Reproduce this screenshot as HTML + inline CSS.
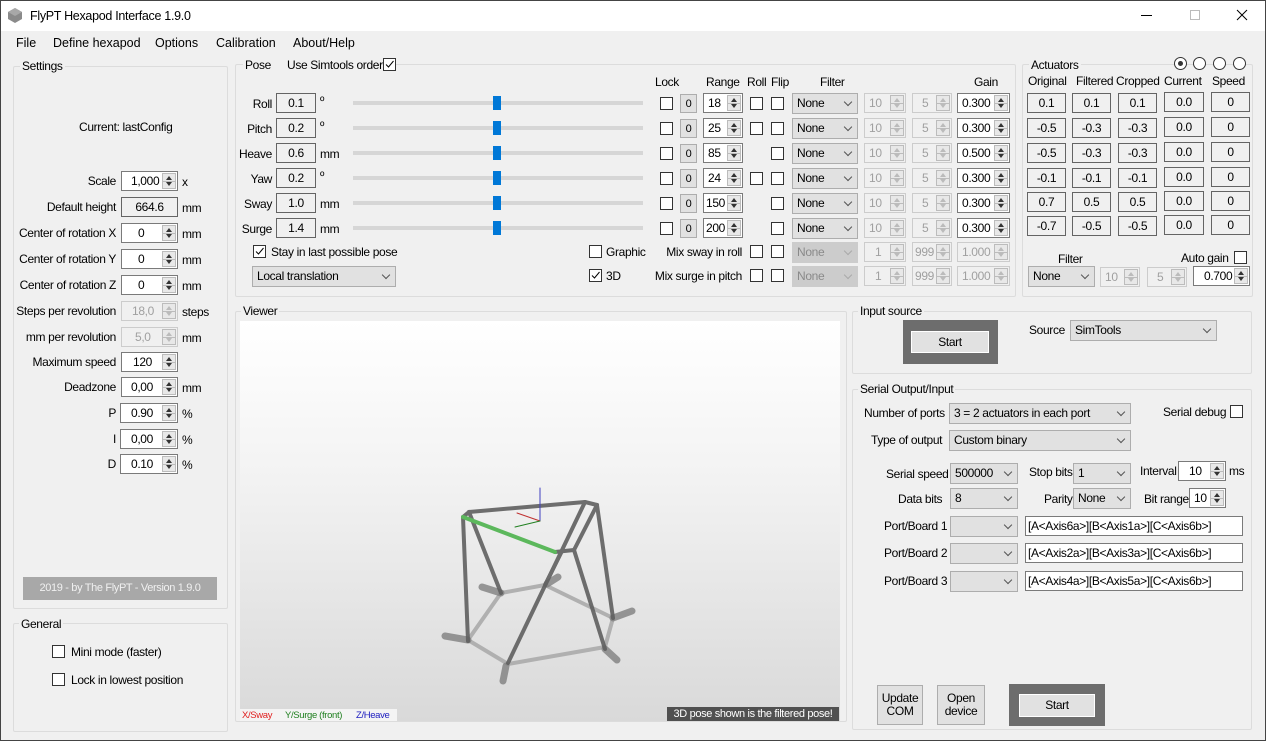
<!DOCTYPE html>
<html><head><meta charset="utf-8"><style>
*{box-sizing:border-box}
body{margin:0;width:1266px;height:741px;overflow:hidden;background:#f0f0f0;font-family:"Liberation Sans",Arial,sans-serif;font-size:12px;color:#000;position:relative;letter-spacing:-0.35px}
.a{position:absolute}
.l{position:absolute;white-space:nowrap;font-size:12px;line-height:14px}
.m{letter-spacing:0;font-size:12.5px}
.r{text-align:right}
.g{position:absolute;border:1px solid #dcdcdc;border-radius:2px}
.gt{position:absolute;background:#f0f0f0;padding:0 2px;white-space:nowrap;line-height:14px}
.bx{position:absolute;border:1px solid #7a7a7a;background:#fff;height:20px;line-height:18px;padding-left:4px;white-space:nowrap;overflow:hidden}
.ro{background:#f0f0f0;border-color:#646464;text-align:center;padding:0}
.dis{background:#f0f0f0;border-color:#ccc;color:#a0a0a0}
.sp{position:absolute;right:1px;top:1px;bottom:1px;width:14px;border:1px solid #bcbcbc;background:#e8e8e8}
.sp:before{content:"";position:absolute;left:3px;top:2px;border:3px solid transparent;border-bottom:4px solid #333;border-top:0}
.sp:after{content:"";position:absolute;left:3px;bottom:2px;border:3px solid transparent;border-top:4px solid #333;border-bottom:0}
.sp i{position:absolute;left:0;right:0;top:7px;height:1px;background:#bcbcbc}
.dis .sp:before{border-bottom-color:#bbb}.dis .sp:after{border-top-color:#bbb}
.cb{position:absolute;width:13px;height:13px;border:1px solid #333;background:#fff}
.cb svg{position:absolute;left:0;top:0}
.dd{position:absolute;height:21px;border:1px solid #adadad;background:#e1e1e1;line-height:19px;padding-left:4px;white-space:nowrap}
.dd:after{content:"";position:absolute;right:6px;top:5px;width:5px;height:5px;border-right:1px solid #555;border-bottom:1px solid #555;transform:rotate(45deg)}
.ddd{background:#ccc;border-color:#ccc;color:#8a8a8a}
.ddd:after{border-color:#aaa}
.btn{position:absolute;border:1px solid #adadad;background:#e1e1e1;text-align:center}
.zb{position:absolute;width:17px;height:19px;border:1px solid #adadad;background:#e1e1e1;text-align:center;line-height:18px;font-size:11px}
.ab{position:absolute;width:39px;height:20px;border:1px solid #646464;background:#f0f0f0;text-align:center;line-height:18px}
.rad{position:absolute;width:13px;height:13px;border:1px solid #333;border-radius:50%;background:#fff}
</style></head><body>
<div class="a" style="left:0;top:0;width:1266px;height:741px;border:1px solid #444"></div>
<div class="a" style="left:1px;top:1px;width:1264px;height:30px;background:#fff"></div>
<svg class="a" style="left:8px;top:8px" width="14" height="15"><polygon points="7,0 14,4 14,11 7,15 0,11 0,4" fill="#8a8a8a"/><polygon points="7,0 14,4 7,8 0,4" fill="#a8a8a8"/></svg>
<div class="l" style="left:30px;top:9px;font-size:12.5px;letter-spacing:-0.3px">FlyPT Hexapod Interface 1.9.0</div>
<div class="a" style="left:1141px;top:15px;width:11px;height:1px;background:#000"></div>
<div class="a" style="left:1190px;top:10px;width:10px;height:10px;border:1px solid #bbb"></div>
<svg class="a" style="left:1236px;top:9px" width="12" height="12"><path d="M1 1L11 11M11 1L1 11" stroke="#000" stroke-width="1"/></svg>
<div class="l m" style="left:16px;top:36px">File</div>
<div class="l m" style="left:53px;top:36px">Define hexapod</div>
<div class="l m" style="left:155px;top:36px">Options</div>
<div class="l m" style="left:216px;top:36px">Calibration</div>
<div class="l m" style="left:293px;top:36px">About/Help</div>

<div class="g" style="left:13px;top:66px;width:215px;height:543px"></div>
<div class="gt" style="left:20px;top:59px">Settings</div>
<div class="l" style="left:79px;top:120px">Current: lastConfig</div>
<div class="l r" style="left:0;width:116px;top:174px">Scale</div><div class="bx" style="left:121px;top:171px;width:57px;padding-left:9px">1,000<div class="sp"><i></i></div></div><div class="l" style="left:182px;top:175px">x</div>
<div class="l r" style="left:0;width:116px;top:200px">Default height</div><div class="bx ro" style="left:121px;top:197px;width:57px">664.6</div><div class="l" style="left:182px;top:201px">mm</div>
<div class="l r" style="left:0;width:116px;top:226px">Center of rotation X</div><div class="bx" style="left:121px;top:223px;width:57px;padding-left:16px">0<div class="sp"><i></i></div></div><div class="l" style="left:182px;top:227px">mm</div>
<div class="l r" style="left:0;width:116px;top:252px">Center of rotation Y</div><div class="bx" style="left:121px;top:249px;width:57px;padding-left:16px">0<div class="sp"><i></i></div></div><div class="l" style="left:182px;top:253px">mm</div>
<div class="l r" style="left:0;width:116px;top:278px">Center of rotation Z</div><div class="bx" style="left:121px;top:275px;width:57px;padding-left:16px">0<div class="sp"><i></i></div></div><div class="l" style="left:182px;top:279px">mm</div>
<div class="l r" style="left:0;width:116px;top:304px">Steps per revolution</div><div class="bx dis" style="left:121px;top:301px;width:57px;padding-left:10px">18,0<div class="sp"><i></i></div></div><div class="l" style="left:182px;top:305px">steps</div>
<div class="l r" style="left:0;width:116px;top:330px">mm per revolution</div><div class="bx dis" style="left:121px;top:327px;width:57px;padding-left:13px">5,0<div class="sp"><i></i></div></div><div class="l" style="left:182px;top:331px">mm</div>
<div class="l r" style="left:0;width:116px;top:355px">Maximum speed</div><div class="bx" style="left:121px;top:352px;width:57px;padding-left:11px">120<div class="sp"><i></i></div></div>
<div class="l r" style="left:0;width:116px;top:380px">Deadzone</div><div class="bx" style="left:121px;top:377px;width:57px;padding-left:9px">0,00<div class="sp"><i></i></div></div><div class="l" style="left:182px;top:381px">mm</div>
<div class="l r" style="left:0;width:116px;top:406px">P</div><div class="bx" style="left:120px;top:403px;width:58px;padding-left:10px">0.90<div class="sp"><i></i></div></div><div class="l" style="left:182px;top:407px">%</div>
<div class="l r" style="left:0;width:116px;top:432px">I</div><div class="bx" style="left:120px;top:429px;width:58px;padding-left:10px">0,00<div class="sp"><i></i></div></div><div class="l" style="left:182px;top:433px">%</div>
<div class="l r" style="left:0;width:116px;top:457px">D</div><div class="bx" style="left:120px;top:454px;width:58px;padding-left:10px">0.10<div class="sp"><i></i></div></div><div class="l" style="left:182px;top:458px">%</div>
<div class="a" style="left:23px;top:577px;width:194px;height:23px;background:#a8a8a8;color:#f0f0f0;text-align:center;line-height:23px;font-size:11px">2019 - by The FlyPT - Version 1.9.0</div>

<div class="g" style="left:13px;top:623px;width:215px;height:109px"></div>
<div class="gt" style="left:19px;top:617px">General</div>
<div class="cb" style="left:52px;top:645px"></div><div class="l" style="left:71px;top:645px">Mini mode (faster)</div>
<div class="cb" style="left:52px;top:673px"></div><div class="l" style="left:71px;top:673px">Lock in lowest position</div>

<div class="g" style="left:235px;top:64px;width:781px;height:233px"></div>
<div class="gt" style="left:243px;top:58px;width:134px">Pose</div>
<div class="l" style="left:287px;top:58px">Use Simtools order</div>
<div class="cb" style="left:383px;top:58px"><svg width="11" height="11"><path d="M2 5.5L4.5 8L9.5 2" stroke="#000" fill="none"/></svg></div>
<div class="l" style="left:655px;top:75px">Lock</div>
<div class="l" style="left:706px;top:75px">Range</div>
<div class="l" style="left:747px;top:75px">Roll</div>
<div class="l" style="left:771px;top:75px">Flip</div>
<div class="l" style="left:820px;top:75px">Filter</div>
<div class="l" style="left:974px;top:75px">Gain</div>

<div class="l r" style="left:230px;width:42px;top:97px">Roll</div><div class="bx ro" style="left:276px;top:93px;width:40px">0.1</div><div class="l" style="left:320px;top:94px">º</div>
<div class="l r" style="left:230px;width:42px;top:122px">Pitch</div><div class="bx ro" style="left:276px;top:118px;width:40px">0.2</div><div class="l" style="left:320px;top:119px">º</div>
<div class="l r" style="left:230px;width:42px;top:147px">Heave</div><div class="bx ro" style="left:276px;top:143px;width:40px">0.6</div><div class="l" style="left:320px;top:147px">mm</div>
<div class="l r" style="left:230px;width:42px;top:172px">Yaw</div><div class="bx ro" style="left:276px;top:168px;width:40px">0.2</div><div class="l" style="left:320px;top:169px">º</div>
<div class="l r" style="left:230px;width:42px;top:197px">Sway</div><div class="bx ro" style="left:276px;top:193px;width:40px">1.0</div><div class="l" style="left:320px;top:197px">mm</div>
<div class="l r" style="left:230px;width:42px;top:222px">Surge</div><div class="bx ro" style="left:276px;top:218px;width:40px">1.4</div><div class="l" style="left:320px;top:222px">mm</div>

<div class="a" style="left:353px;top:101px;width:290px;height:4px;background:#d6d6d6"></div><div class="a" style="left:493px;top:96px;width:8px;height:14px;background:#0078d7"></div>
<div class="a" style="left:353px;top:126px;width:290px;height:4px;background:#d6d6d6"></div><div class="a" style="left:493px;top:121px;width:8px;height:14px;background:#0078d7"></div>
<div class="a" style="left:353px;top:151px;width:290px;height:4px;background:#d6d6d6"></div><div class="a" style="left:493px;top:146px;width:8px;height:14px;background:#0078d7"></div>
<div class="a" style="left:353px;top:176px;width:290px;height:4px;background:#d6d6d6"></div><div class="a" style="left:493px;top:171px;width:8px;height:14px;background:#0078d7"></div>
<div class="a" style="left:353px;top:201px;width:290px;height:4px;background:#d6d6d6"></div><div class="a" style="left:493px;top:196px;width:8px;height:14px;background:#0078d7"></div>
<div class="a" style="left:353px;top:226px;width:290px;height:4px;background:#d6d6d6"></div><div class="a" style="left:493px;top:221px;width:8px;height:14px;background:#0078d7"></div>

<div class="cb" style="left:660px;top:97px"></div><div class="zb" style="left:680px;top:94px">0</div><div class="bx" style="left:703px;top:93px;width:40px">18<div class="sp"><i></i></div></div><div class="cb" style="left:750px;top:97px"></div><div class="cb" style="left:771px;top:97px"></div><div class="dd" style="left:792px;top:93px;width:66px">None</div><div class="bx dis" style="left:864px;top:93px;width:42px">10<div class="sp"><i></i></div></div><div class="bx dis" style="left:912px;top:93px;width:40px;padding-left:9px">5<div class="sp"><i></i></div></div><div class="bx" style="left:957px;top:93px;width:53px">0.300<div class="sp"><i></i></div></div>
<div class="cb" style="left:660px;top:122px"></div><div class="zb" style="left:680px;top:119px">0</div><div class="bx" style="left:703px;top:118px;width:40px">25<div class="sp"><i></i></div></div><div class="cb" style="left:750px;top:122px"></div><div class="cb" style="left:771px;top:122px"></div><div class="dd" style="left:792px;top:118px;width:66px">None</div><div class="bx dis" style="left:864px;top:118px;width:42px">10<div class="sp"><i></i></div></div><div class="bx dis" style="left:912px;top:118px;width:40px;padding-left:9px">5<div class="sp"><i></i></div></div><div class="bx" style="left:957px;top:118px;width:53px">0.300<div class="sp"><i></i></div></div>
<div class="cb" style="left:660px;top:147px"></div><div class="zb" style="left:680px;top:144px">0</div><div class="bx" style="left:703px;top:143px;width:40px">85<div class="sp"><i></i></div></div><div class="cb" style="left:771px;top:147px"></div><div class="dd" style="left:792px;top:143px;width:66px">None</div><div class="bx dis" style="left:864px;top:143px;width:42px">10<div class="sp"><i></i></div></div><div class="bx dis" style="left:912px;top:143px;width:40px;padding-left:9px">5<div class="sp"><i></i></div></div><div class="bx" style="left:957px;top:143px;width:53px">0.500<div class="sp"><i></i></div></div>
<div class="cb" style="left:660px;top:172px"></div><div class="zb" style="left:680px;top:169px">0</div><div class="bx" style="left:703px;top:168px;width:40px">24<div class="sp"><i></i></div></div><div class="cb" style="left:750px;top:172px"></div><div class="cb" style="left:771px;top:172px"></div><div class="dd" style="left:792px;top:168px;width:66px">None</div><div class="bx dis" style="left:864px;top:168px;width:42px">10<div class="sp"><i></i></div></div><div class="bx dis" style="left:912px;top:168px;width:40px;padding-left:9px">5<div class="sp"><i></i></div></div><div class="bx" style="left:957px;top:168px;width:53px">0.300<div class="sp"><i></i></div></div>
<div class="cb" style="left:660px;top:197px"></div><div class="zb" style="left:680px;top:194px">0</div><div class="bx" style="left:703px;top:193px;width:40px;padding-left:2px">150<div class="sp"><i></i></div></div><div class="cb" style="left:771px;top:197px"></div><div class="dd" style="left:792px;top:193px;width:66px">None</div><div class="bx dis" style="left:864px;top:193px;width:42px">10<div class="sp"><i></i></div></div><div class="bx dis" style="left:912px;top:193px;width:40px;padding-left:9px">5<div class="sp"><i></i></div></div><div class="bx" style="left:957px;top:193px;width:53px">0.300<div class="sp"><i></i></div></div>
<div class="cb" style="left:660px;top:222px"></div><div class="zb" style="left:680px;top:219px">0</div><div class="bx" style="left:703px;top:218px;width:40px;padding-left:2px">200<div class="sp"><i></i></div></div><div class="cb" style="left:771px;top:222px"></div><div class="dd" style="left:792px;top:218px;width:66px">None</div><div class="bx dis" style="left:864px;top:218px;width:42px">10<div class="sp"><i></i></div></div><div class="bx dis" style="left:912px;top:218px;width:40px;padding-left:9px">5<div class="sp"><i></i></div></div><div class="bx" style="left:957px;top:218px;width:53px">0.300<div class="sp"><i></i></div></div>

<div class="l r" style="left:600px;width:142px;top:245px">Mix sway in roll</div><div class="cb" style="left:750px;top:245px"></div><div class="cb" style="left:771px;top:245px"></div><div class="dd ddd" style="left:792px;top:242px;width:66px">None</div><div class="bx dis" style="left:864px;top:242px;width:42px;padding-left:10px">1<div class="sp"><i></i></div></div><div class="bx dis" style="left:912px;top:242px;width:40px;padding-left:2px">999<div class="sp"><i></i></div></div><div class="bx dis" style="left:957px;top:242px;width:53px">1.000<div class="sp"><i></i></div></div>
<div class="l r" style="left:600px;width:142px;top:269px">Mix surge in pitch</div><div class="cb" style="left:750px;top:269px"></div><div class="cb" style="left:771px;top:269px"></div><div class="dd ddd" style="left:792px;top:266px;width:66px">None</div><div class="bx dis" style="left:864px;top:266px;width:42px;padding-left:10px">1<div class="sp"><i></i></div></div><div class="bx dis" style="left:912px;top:266px;width:40px;padding-left:2px">999<div class="sp"><i></i></div></div><div class="bx dis" style="left:957px;top:266px;width:53px">1.000<div class="sp"><i></i></div></div>

<div class="cb" style="left:253px;top:245px"><svg width="11" height="11"><path d="M2 5.5L4.5 8L9.5 2" stroke="#000" fill="none"/></svg></div><div class="l" style="left:271px;top:245px">Stay in last possible pose</div>
<div class="dd" style="left:252px;top:266px;width:144px">Local translation</div>
<div class="cb" style="left:589px;top:245px"></div><div class="l" style="left:606px;top:245px">Graphic</div>
<div class="cb" style="left:589px;top:269px"><svg width="11" height="11"><path d="M2 5.5L4.5 8L9.5 2" stroke="#000" fill="none"/></svg></div><div class="l" style="left:606px;top:269px">3D</div>

<div class="g" style="left:1022px;top:64px;width:231px;height:233px"></div>
<div class="gt" style="left:1029px;top:58px">Actuators</div>
<div class="rad" style="left:1174px;top:57px"><div class="a" style="left:3px;top:3px;width:5px;height:5px;border-radius:50%;background:#333"></div></div>
<div class="rad" style="left:1193px;top:57px"></div><div class="rad" style="left:1213px;top:57px"></div><div class="rad" style="left:1233px;top:57px"></div>
<div class="l" style="left:1028px;top:74px">Original</div><div class="l" style="left:1076px;top:74px">Filtered</div><div class="l" style="left:1116px;top:74px">Cropped</div><div class="l" style="left:1164px;top:74px">Current</div><div class="l" style="left:1212px;top:74px">Speed</div>
<div class="ab" style="left:1027px;top:93px">0.1</div><div class="ab" style="left:1072px;top:93px">0.1</div><div class="ab" style="left:1118px;top:93px">0.1</div><div class="ab" style="left:1164px;top:92px;width:40px">0.0</div><div class="ab" style="left:1211px;top:92px;width:39px">0</div>
<div class="ab" style="left:1027px;top:118px">-0.5</div><div class="ab" style="left:1072px;top:118px">-0.3</div><div class="ab" style="left:1118px;top:118px">-0.3</div><div class="ab" style="left:1164px;top:117px;width:40px">0.0</div><div class="ab" style="left:1211px;top:117px;width:39px">0</div>
<div class="ab" style="left:1027px;top:143px">-0.5</div><div class="ab" style="left:1072px;top:143px">-0.3</div><div class="ab" style="left:1118px;top:143px">-0.3</div><div class="ab" style="left:1164px;top:142px;width:40px">0.0</div><div class="ab" style="left:1211px;top:142px;width:39px">0</div>
<div class="ab" style="left:1027px;top:168px">-0.1</div><div class="ab" style="left:1072px;top:168px">-0.1</div><div class="ab" style="left:1118px;top:168px">-0.1</div><div class="ab" style="left:1164px;top:167px;width:40px">0.0</div><div class="ab" style="left:1211px;top:167px;width:39px">0</div>
<div class="ab" style="left:1027px;top:192px">0.7</div><div class="ab" style="left:1072px;top:192px">0.5</div><div class="ab" style="left:1118px;top:192px">0.5</div><div class="ab" style="left:1164px;top:191px;width:40px">0.0</div><div class="ab" style="left:1211px;top:191px;width:39px">0</div>
<div class="ab" style="left:1027px;top:216px">-0.7</div><div class="ab" style="left:1072px;top:216px">-0.5</div><div class="ab" style="left:1118px;top:216px">-0.5</div><div class="ab" style="left:1164px;top:215px;width:40px">0.0</div><div class="ab" style="left:1211px;top:215px;width:39px">0</div>
<div class="l" style="left:1058px;top:252px">Filter</div>
<div class="l" style="left:1181px;top:251px">Auto gain</div><div class="cb" style="left:1234px;top:251px"></div>
<div class="dd" style="left:1028px;top:266px;width:67px">None</div>
<div class="bx dis" style="left:1100px;top:267px;width:40px">10<div class="sp"><i></i></div></div>
<div class="bx dis" style="left:1147px;top:267px;width:40px;padding-left:9px">5<div class="sp"><i></i></div></div>
<div class="bx" style="left:1193px;top:266px;width:57px;padding-left:10px">0.700<div class="sp"><i></i></div></div>

<div class="g" style="left:235px;top:311px;width:612px;height:411px"></div>
<div class="gt" style="left:241px;top:304px">Viewer</div>
<div class="a" style="left:240px;top:321px;width:600px;height:400px;background:linear-gradient(#fff 0%,#f4f4f4 35%,#d9d9d9 100%)"></div>
<svg class="a" style="left:240px;top:321px" width="600" height="400">
<g transform="translate(-240,-321)" stroke-linecap="round">
<g stroke="#b0b0b0" stroke-width="4">
<line x1="501" y1="593" x2="545" y2="585"/><line x1="545" y1="585" x2="613" y2="618"/><line x1="613" y1="618" x2="605" y2="647"/><line x1="605" y1="647" x2="508" y2="664"/><line x1="508" y1="664" x2="468" y2="640"/><line x1="468" y1="640" x2="501" y2="593"/>
</g>
<g stroke="#808080" stroke-width="7" opacity="0.8">
<line x1="501" y1="593" x2="482" y2="587"/><line x1="547" y1="584" x2="558" y2="577"/><line x1="613" y1="618" x2="632" y2="611"/><line x1="605" y1="649" x2="617" y2="660"/><line x1="506" y1="666" x2="503" y2="681"/><line x1="468" y1="640" x2="445" y2="636"/>
</g>
<g stroke="#606060" stroke-width="4" opacity="0.9">
<line x1="463" y1="517" x2="468" y2="641"/><line x1="469" y1="512" x2="501" y2="593"/><line x1="585" y1="502" x2="508" y2="663"/><line x1="597" y1="505" x2="613" y2="618"/><line x1="574" y1="550" x2="605" y2="649"/><line x1="562" y1="551" x2="545" y2="585"/>
<line x1="469" y1="512" x2="585" y2="502"/><line x1="585" y1="502" x2="597" y2="505"/><line x1="597" y1="505" x2="574" y2="550"/><line x1="574" y1="550" x2="555" y2="552"/><line x1="463" y1="517" x2="469" y2="512"/>
</g>
<line x1="463" y1="517" x2="555" y2="552" stroke="#5cb85c" stroke-width="4"/>
<line x1="540" y1="488" x2="540" y2="521" stroke="#4040c0" stroke-width="1"/>
<line x1="517" y1="513" x2="540" y2="521" stroke="#c03030" stroke-width="1"/>
<line x1="515" y1="527" x2="540" y2="521" stroke="#208020" stroke-width="1"/>
</g></svg>
<div class="a" style="left:240px;top:709px;width:157px;height:12px;background:#f4f4f4"></div>
<div class="l" style="left:242px;top:710px;font-size:9.5px;line-height:11px;color:#e02020">X/Sway</div>
<div class="l" style="left:285px;top:710px;font-size:9.5px;line-height:11px;color:#208020">Y/Surge (front)</div>
<div class="l" style="left:356px;top:710px;font-size:9.5px;line-height:11px;color:#2020c0">Z/Heave</div>
<div class="a" style="left:667px;top:707px;width:172px;height:14px;background:#505050;color:#fff;font-size:11px;line-height:14px;text-align:center;white-space:nowrap">3D pose shown is the filtered pose!</div>

<div class="g" style="left:852px;top:311px;width:400px;height:63px"></div>
<div class="gt" style="left:858px;top:304px">Input source</div>
<div class="a" style="left:903px;top:320px;width:95px;height:44px;background:#6d6d6d"></div>
<div class="btn" style="left:911px;top:331px;width:78px;height:22px;line-height:20px;border:1px solid #fff">Start</div>
<div class="l" style="left:1029px;top:323px">Source</div>
<div class="dd" style="left:1070px;top:320px;width:147px">SimTools</div>

<div class="g" style="left:852px;top:389px;width:400px;height:341px"></div>
<div class="gt" style="left:858px;top:382px">Serial Output/Input</div>
<div class="l" style="left:864px;top:406px">Number of ports</div><div class="dd" style="left:949px;top:403px;width:182px">3 = 2 actuators in each port</div>
<div class="l" style="left:1163px;top:405px">Serial debug</div><div class="cb" style="left:1230px;top:405px"></div>
<div class="l" style="left:871px;top:433px">Type of output</div><div class="dd" style="left:949px;top:430px;width:182px">Custom binary</div>
<div class="l" style="left:886px;top:467px">Serial speed</div><div class="dd" style="left:950px;top:463px;width:68px">500000</div>
<div class="l" style="left:1029px;top:465px">Stop bits</div><div class="dd" style="left:1073px;top:463px;width:58px">1</div>
<div class="l" style="left:1140px;top:464px">Interval</div><div class="bx" style="left:1178px;top:461px;width:48px;padding-left:10px">10<div class="sp"><i></i></div></div><div class="l" style="left:1229px;top:464px">ms</div>
<div class="l" style="left:898px;top:492px">Data bits</div><div class="dd" style="left:950px;top:488px;width:68px">8</div>
<div class="l" style="left:1044px;top:492px">Parity</div><div class="dd" style="left:1073px;top:488px;width:58px">None</div>
<div class="l" style="left:1144px;top:492px">Bit range</div><div class="bx" style="left:1189px;top:488px;width:37px">10<div class="sp"><i></i></div></div>
<div class="l" style="left:884px;top:519px">Port/Board 1</div><div class="dd" style="left:950px;top:516px;width:68px"></div><div class="bx" style="left:1025px;top:516px;width:218px;padding-left:2px">[A&lt;Axis6a&gt;][B&lt;Axis1a&gt;][C&lt;Axis6b&gt;]</div>
<div class="l" style="left:884px;top:546px">Port/Board 2</div><div class="dd" style="left:950px;top:543px;width:68px"></div><div class="bx" style="left:1025px;top:543px;width:218px;padding-left:2px">[A&lt;Axis2a&gt;][B&lt;Axis3a&gt;][C&lt;Axis6b&gt;]</div>
<div class="l" style="left:884px;top:574px">Port/Board 3</div><div class="dd" style="left:950px;top:571px;width:68px"></div><div class="bx" style="left:1025px;top:571px;width:218px;padding-left:2px">[A&lt;Axis4a&gt;][B&lt;Axis5a&gt;][C&lt;Axis6b&gt;]</div>
<div class="btn" style="left:877px;top:685px;width:46px;height:40px;padding-top:6px;line-height:13px">Update<br>COM</div>
<div class="btn" style="left:937px;top:685px;width:48px;height:40px;padding-top:6px;line-height:13px">Open<br>device</div>
<div class="a" style="left:1009px;top:684px;width:96px;height:42px;background:#6d6d6d"></div>
<div class="btn" style="left:1019px;top:694px;width:76px;height:23px;line-height:21px;border:1px solid #fff">Start</div>
</body></html>
